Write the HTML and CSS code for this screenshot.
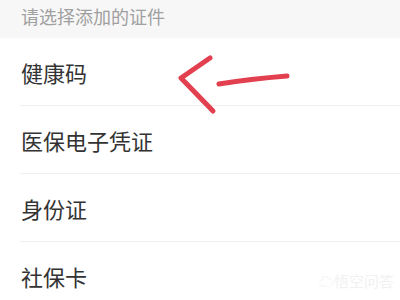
FILE: index.html
```html
<!DOCTYPE html>
<html lang="zh">
<head>
<meta charset="utf-8">
<link rel="stylesheet" href="styles.css">
</head>
<body>
<div class="page">
  <div class="header">请选择添加的证件</div>
  <ul class="list">
    <li class="item">健康码</li>
    <li class="item">医保电子凭证</li>
    <li class="item">身份证</li>
    <li class="item">社保卡</li>
  </ul>
  <svg class="arrow" width="400" height="300" viewBox="0 0 400 300">
    <path d="M210 58 L181 78 L213 111" fill="none" stroke="#e2404f" stroke-width="5" stroke-linecap="round" stroke-linejoin="round"/>
    <path d="M219 84 Q250 79 287 76" fill="none" stroke="#e2404f" stroke-width="5" stroke-linecap="round"/>
  </svg>
  <div class="watermark">&#9729;悟空问答</div>
</div>
</body>
</html>
```
FILE: styles.css
```css
html, body {
  margin: 0;
  padding: 0;
  background: #ffffff;
}
.page {
  position: relative;
  width: 400px;
  height: 300px;
  overflow: hidden;
  font-family: "Noto Sans CJK SC", "Noto Sans", sans-serif;
}
.header {
  height: 38px;
  background: #f7f7f7;
  color: #a0a0a0;
  font-size: 18px;
  line-height: 32px;
  padding-left: 21px;
  box-sizing: border-box;
}
.list {
  list-style: none;
  margin: 0;
  padding: 0 0 0 20px;
}
.item {
  height: 67px;
  border-bottom: 1px solid #efefef;
  display: flex;
  align-items: center;
  padding-left: 1px;
  font-size: 22px;
  color: #333333;
}
.arrow {
  position: absolute;
  left: 0;
  top: 0;
}
.watermark {
  position: absolute;
  right: 6px;
  top: 270px;
  font-size: 15px;
  color: #f1f1f1;
  letter-spacing: 0;
}
```
